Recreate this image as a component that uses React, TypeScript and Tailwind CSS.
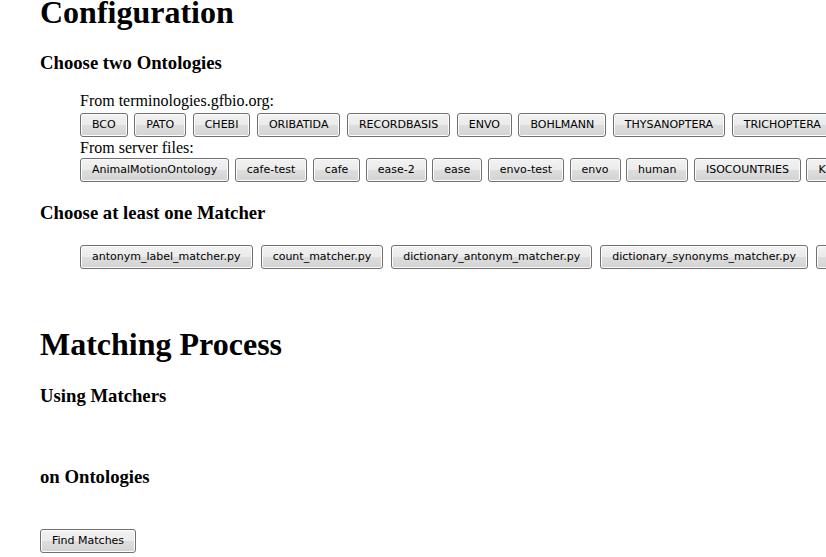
import React from "react";

const terminologies = ["BCO", "PATO", "CHEBI", "ORIBATIDA", "RECORDBASIS", "ENVO", "BOHLMANN", "THYSANOPTERA", "TRICHOPTERA"];
const serverFiles = ["AnimalMotionOntology", "cafe-test", "cafe", "ease-2", "ease", "envo-test", "envo", "human", "ISOCOUNTRIES", "KINGDOM"];
const matchers = ["antonym_label_matcher.py", "count_matcher.py", "dictionary_antonym_matcher.py", "dictionary_synonyms_matcher.py", "equal_label_matcher.py"];

function Btn({ label }: { label: string }) {
    return (
        <button className="shrink-0 h-[24px] px-[11px] whitespace-nowrap rounded-[3px] border border-[#707070] bg-[linear-gradient(#f2f2f2_0%,#ebebeb_48%,#dddddd_52%,#d3d3d3_100%)] shadow-[inset_0_0_0_1px_#fcfcfc] text-[11px] leading-none text-black font-['DejaVu_Sans',sans-serif]">
            {label}
        </button>
    );
}

export default function App() {
    return (
        <div className="w-[826px] h-[557px] overflow-hidden bg-white text-black font-['Liberation_Serif',serif]">
            <div className="pl-10">
                <h1 className="-mt-[6px] mb-[21.2px] text-[32px] leading-[36.8px] font-bold whitespace-nowrap">Configuration</h1>
                <h3 className="mb-[18.7px] text-[18.72px] leading-[21.5px] font-bold">Choose two Ontologies</h3>

                {/* Ontology choices */}
                <div className="ml-10 mb-[18px]">
                    <div className="text-base leading-[18.4px]">From terminologies.gfbio.org:</div>
                    <div className="flex gap-[6.5px] pt-[2px] pb-[2px]">
                        {terminologies.map(t => <Btn key={t} label={t} />)}
                    </div>
                    <div className="text-base leading-[18.4px]">From server files:</div>
                    <div className="flex gap-[5.5px] pt-[1px] pb-[2px]">
                        {serverFiles.map(f => <Btn key={f} label={f} />)}
                    </div>
                </div>

                <h3 className="mb-[21.5px] text-[18.72px] leading-[21.5px] font-bold">Choose at least one Matcher</h3>
                <div className="ml-10 mb-[57.3px] flex gap-[8px]">
                    {matchers.map(m => <Btn key={m} label={m} />)}
                </div>

                <h1 className="mb-[21.6px] text-[32px] leading-[36.8px] font-bold whitespace-nowrap">Matching Process</h1>
                <h3 className="mb-[59.5px] text-[18.72px] leading-[21.5px] font-bold">Using Matchers</h3>
                <h3 className="mb-[41.5px] text-[18.72px] leading-[21.5px] font-bold">on Ontologies</h3>
                <div className="flex">
                    <Btn label="Find Matches" />
                </div>
            </div>
        </div>
    );
}
